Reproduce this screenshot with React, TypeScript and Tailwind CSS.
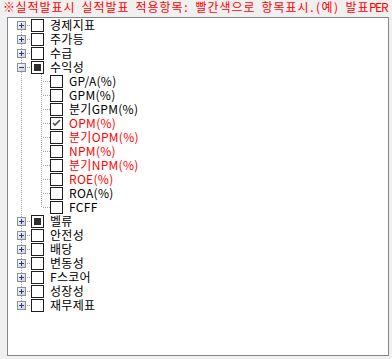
import React from "react";

type Item = { label: string; red?: boolean; state?: "none" | "check" | "partial"; children?: Item[] };

const tree: Item[] = [
  { label: "경제지표" },
  { label: "주가등" },
  { label: "수급" },
  {
    label: "수익성",
    state: "partial",
    children: [
      { label: "GP/A(%)" },
      { label: "GPM(%)" },
      { label: "분기GPM(%)" },
      { label: "OPM(%)", red: true, state: "check" },
      { label: "분기OPM(%)", red: true },
      { label: "NPM(%)", red: true },
      { label: "분기NPM(%)", red: true },
      { label: "ROE(%)", red: true },
      { label: "ROA(%)" },
      { label: "FCFF" },
    ],
  },
  { label: "벨류", state: "partial" },
  { label: "안전성" },
  { label: "배당" },
  { label: "변동성" },
  { label: "F스코어" },
  { label: "성장성" },
  { label: "재무제표" },
];

const DOT = "#a0a0a0";

function VLine({ x, y1, y2 }: { x: number; y1: number; y2: number }) {
  const rects = [];
  for (let y = y1; y < y2; y++) {
    if (y % 2 === 0) rects.push(<rect key={y} x={x} y={y} width={1} height={1} fill={DOT} />);
  }
  return <>{rects}</>;
}
function HLine({ y, x1, x2 }: { y: number; x1: number; x2: number }) {
  const rects = [];
  for (let x = x1; x < x2; x++) {
    if (x % 2 === 1) rects.push(<rect key={x} x={x} y={y} width={1} height={1} fill={DOT} />);
  }
  return <>{rects}</>;
}

function Expander({ x, y, open }: { x: number; y: number; open: boolean }) {
  return (
    <g>
      <defs>
        <linearGradient id="eg" x1="0" y1="0" x2="1" y2="1">
          <stop offset="0" stopColor="#ffffff" />
          <stop offset="1" stopColor="#c8ccd4" />
        </linearGradient>
      </defs>
      <rect x={x + 0.5} y={y + 0.5} width={8} height={8} fill="url(#eg)" stroke="#8e8f8f" />
      <rect x={x + 2} y={y + 4} width={5} height={1} fill="#1f3c82" />
      {!open && <rect x={x + 4} y={y + 2} width={1} height={5} fill="#1f3c82" />}
    </g>
  );
}

function CheckBox({ state }: { state?: "none" | "check" | "partial" }) {
  return (
    <div className="w-[13px] h-[13px] border border-[#1e1e1e] bg-white flex items-center justify-center shrink-0">
      {state === "partial" && <div className="w-[7px] h-[7px] bg-[#2e2e2e]" />}
      {state === "check" && (
        <svg width="11" height="11" viewBox="0 0 11 11">
          <polyline points="2,5 4,7 9,2" fill="none" stroke="#505050" strokeWidth="1.6" />
        </svg>
      )}
    </div>
  );
}

const font = { fontFamily: '"Noto Sans CJK KR", "Noto Sans", sans-serif' };

const HEADER = "※실적발표시 실적발표 적용항목: 빨간색으로 항목표시.(예) 발표PER";

function isWide(ch: string) {
  const c = ch.charCodeAt(0);
  return c >= 0x1100 || ch === "※";
}

export default function App() {
  const rows: React.ReactNode[] = [];
  tree.forEach((item, i) => {
    const first = i === 0;
    const last = i === tree.length - 1;
    const hasKids = !!item.children;
    rows.push(
      <div key={item.label} className="flex items-center h-[14px]">
        <svg width="23" height="14" className="shrink-0">
          <VLine x={13} y1={first ? 8 : 0} y2={last ? 7 : 14} />
          <HLine y={7} x1={18} x2={23} />
          <Expander x={9} y={3} open={hasKids} />
        </svg>
        <CheckBox state={item.state} />
        <span className={`ml-[6px] text-[12px] leading-[14px] whitespace-nowrap tracking-[0.3px] ${item.red ? "text-[#ff0000]" : "text-black"}`}>
          {item.label}
        </span>
      </div>
    );
    if (item.children) {
      item.children.forEach((c, j) => {
        const clast = j === item.children!.length - 1;
        rows.push(
          <div key={c.label} className="flex items-center h-[14px]">
            <svg width="42" height="14" className="shrink-0">
              <VLine x={13} y1={0} y2={14} />
              <VLine x={33} y1={0} y2={clast ? 8 : 14} />
              <HLine y={7} x1={34} x2={42} />
            </svg>
            <CheckBox state={c.state} />
            <span className={`ml-[6px] text-[12px] leading-[14px] whitespace-nowrap tracking-[0.3px] ${c.red ? "text-[#ff0000]" : "text-black"}`}>
              {c.label}
            </span>
          </div>
        );
      });
    }
  });

  return (
    <div className="w-[392px] h-[359px] bg-[#f0f0f0] overflow-hidden" style={font}>
      <div className="h-[17px] pl-[3px] text-[12px] leading-[14px] text-[#ff0000] whitespace-nowrap flex">
        {Array.from(HEADER).map((ch, k) =>
          isWide(ch) ? (
            <span key={k} className="inline-block w-[12px] text-center">{ch}</span>
          ) : (
            <span key={k} className="inline-block w-[6px] text-center">{ch === " " ? "\u00a0" : ch}</span>
          )
        )}
      </div>
      <div className="ml-[7px] w-[382px] h-[339px] border border-[#828790] bg-white pt-0 flex flex-col">
        {rows}
      </div>
    </div>
  );
}
